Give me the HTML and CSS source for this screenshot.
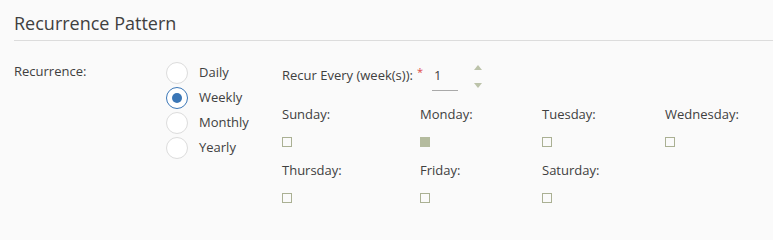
FILE: index.html
```html
<!DOCTYPE html>
<html>
<head>
<meta charset="utf-8">
<link rel="stylesheet" href="styles.css">
</head>
<body>
<div class="panel">
  <h2 class="title">Recurrence Pattern</h2>
  <div class="form-row">
    <div class="field-label">Recurrence:</div>
    <div class="radios">
      <label class="radio"><span class="circle"></span><span>Daily</span></label>
      <label class="radio"><span class="circle checked"></span><span>Weekly</span></label>
      <label class="radio"><span class="circle"></span><span>Monthly</span></label>
      <label class="radio"><span class="circle"></span><span>Yearly</span></label>
    </div>
    <div class="detail">
      <div class="recur-row">
        <span class="recur-label">Recur Every (week(s)):</span>
        <span class="req">*</span>
        <span class="num-input">1</span>
        <span class="spinner">
          <span class="arrow up"></span>
          <span class="arrow down"></span>
        </span>
      </div>
      <div class="days">
        <div class="day"><div class="day-label">Sunday:</div><span class="box"></span></div>
        <div class="day"><div class="day-label">Monday:</div><span class="box on"></span></div>
        <div class="day"><div class="day-label">Tuesday:</div><span class="box"></span></div>
        <div class="day"><div class="day-label">Wednesday:</div><span class="box"></span></div>
        <div class="day"><div class="day-label">Thursday:</div><span class="box"></span></div>
        <div class="day"><div class="day-label">Friday:</div><span class="box"></span></div>
        <div class="day"><div class="day-label">Saturday:</div><span class="box"></span></div>
      </div>
    </div>
  </div>
</div>
</body>
</html>
```
FILE: styles.css
```css
html, body {
  margin: 0;
  padding: 0;
  background: #fafafa;
}
body {
  font-family: "Open Sans", "Noto Sans", "Liberation Sans", sans-serif;
  color: #404040;
  font-size: 13px;
}
.panel {
  padding-left: 14px;
}
.title {
  margin: 0;
  padding-top: 10px;
  box-sizing: border-box;
  height: 41px;
  font-size: 18px;
  font-weight: normal;
  line-height: 26px;
  color: #404040;
  border-bottom: 1px solid #dcdcdc;
}
.form-row {
  display: flex;
  align-items: flex-start;
  padding-top: 20px;
}
.field-label {
  width: 152px;
  line-height: 20px;
}
.radios {
  width: 116px;
  display: flex;
  flex-direction: column;
  margin-top: -1px;
}
.radio {
  display: flex;
  align-items: center;
  height: 25px;
}
.radio .circle + span {
  margin-top: -2px;
}
.circle {
  width: 20px;
  height: 20px;
  border: 1px solid #dcdcdc;
  border-radius: 50%;
  background: #fff;
  margin-right: 11px;
  position: relative;
  box-sizing: content-box;
}
.circle.checked {
  border-color: #3c78b8;
}
.circle.checked::after {
  content: "";
  position: absolute;
  left: 5px;
  top: 5px;
  width: 10px;
  height: 10px;
  border-radius: 50%;
  background: #3a76b6;
}
.detail {
  display: flex;
  flex-direction: column;
}
.recur-row {
  display: flex;
  align-items: flex-start;
  height: 43px;
}
.recur-label {
  line-height: 20px;
  margin-top: 4px;
}
.req {
  color: #e04848;
  font-size: 11px;
  margin-left: 4px;
  margin-top: 4px;
  line-height: 14px;
}
.num-input {
  width: 26px;
  height: 26px;
  margin-left: 9px;
  margin-top: 4px;
  padding-left: 2px;
  box-sizing: border-box;
  line-height: 20px;
  border-bottom: 1px solid #a9a9a9;
  font-size: 13px;
}
.spinner {
  display: flex;
  flex-direction: column;
  margin-left: 16px;
  margin-top: 4px;
}
.arrow {
  width: 0;
  height: 0;
  border-left: 4px solid transparent;
  border-right: 4px solid transparent;
}
.arrow.up {
  border-bottom: 5px solid #bcc3aa;
}
.arrow.down {
  border-top: 5px solid #bcc3aa;
  margin-top: 13px;
}
.days {
  display: grid;
  grid-template-columns: 138px 122px 123px auto;
  row-gap: 13px;
}
.day-label {
  line-height: 20px;
  height: 20px;
}
.box {
  display: block;
  width: 8px;
  height: 8px;
  border: 1px solid #aab093;
  margin-top: 13px;
}
.box.on {
  background: #b4bb9e;
  border-color: #b4bb9e;
}
```
